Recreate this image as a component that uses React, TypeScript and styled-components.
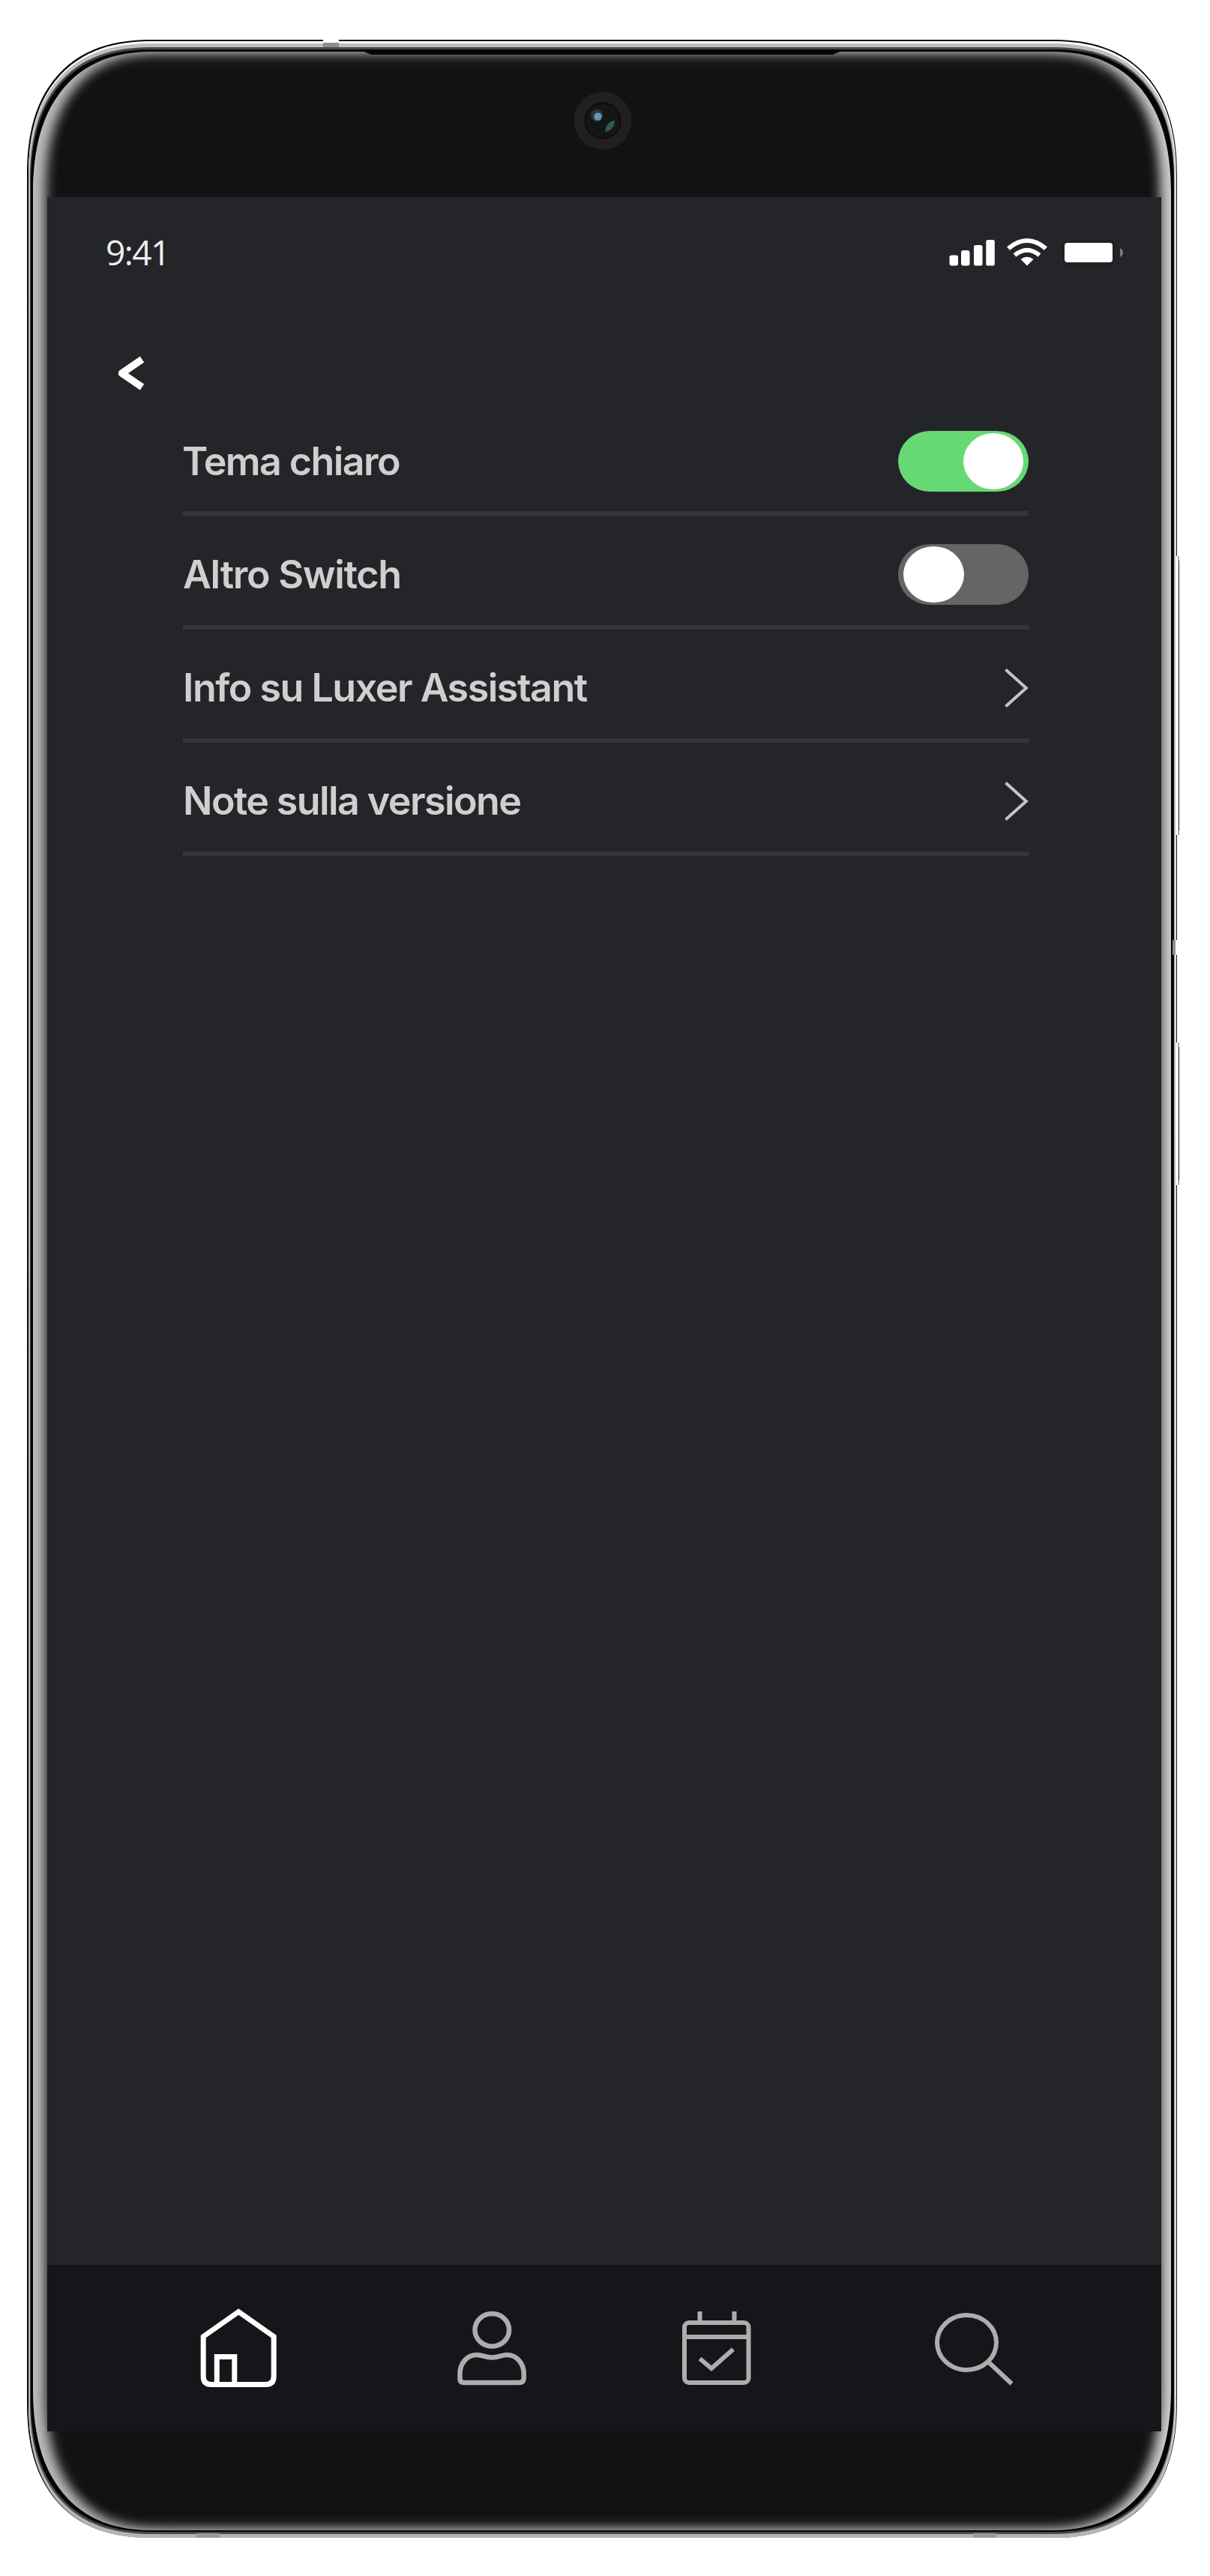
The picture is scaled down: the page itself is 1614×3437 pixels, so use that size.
import React, { useState } from "react";
import styled, { createGlobalStyle, css } from "styled-components";

const GlobalStyle = createGlobalStyle`
  *, *::before, *::after { box-sizing: border-box; }
  body { margin: 0; background: #fff; }
  button { border: 0; padding: 0; background: none; font: inherit; }
  svg { display: block; }
`;

const rounded = (rx: number, ry: number) => css`
  border-radius: ${rx * 0.88}px / ${ry * 0.86}px;
  @supports (corner-shape: superellipse(1.25)) {
    border-radius: ${rx}px / ${ry}px;
    corner-shape: superellipse(1.25);
  }
`;

const Stage = styled.main`
  width: 1614px;
  height: 3437px;
  padding: 53px 0 0 36px;
  background: #fff;
`;

const Outline = styled.div`
  position: relative;
  width: 1534px;
  height: 3333px;
  padding: 2px 1px 0 2px;
  background: #0c0c0c;
  ${rounded(167, 182)}
`;

const Shine = styled.div`
  height: 100%;
  padding: 3px 1px 0 0;
  background: #fff;
  ${rounded(166, 181)}
`;

const Metal = styled.div`
  height: 100%;
  padding: 5px 2px 5px 2px;
  background: linear-gradient(#bdbdbd, #b4b4b4);
  ${rounded(165, 180)}
`;

const Rim = styled.div`
  height: 100%;
  padding: 3px 0 3px 1px;
  background: #484848;
  ${rounded(163, 178)}
`;

const Gap = styled.div`
  height: 100%;
  padding: 3px 4px 2px 3px;
  background: #040404;
  ${rounded(162, 180)}
`;

const Glass = styled.div`
  display: flex;
  flex-direction: column;
  height: 100%;
  padding: 0 13px 0 19px;
  background: #121212;
  box-shadow:
    inset 21px 0 16px -4px rgba(200, 200, 200, 0.9),
    inset -18px 0 16px -4px rgba(212, 212, 212, 0.95),
    inset 0 3px 20px 3px rgba(130, 130, 130, 0.42),
    inset 0 -3px 18px 2px rgba(130, 130, 130, 0.4);
  ${rounded(162, 192)}
`;

const Forehead = styled.div`
  display: flex;
  justify-content: center;
  flex: none;
  height: 194px;
  padding: 53px 5px 0 0;
`;

const Speaker = styled.div`
  position: absolute;
  left: 442px;
  top: 13px;
  width: 650px;
  height: 7px;
  background: #050505;
  clip-path: polygon(0 0, 100% 0, 97.3% 100%, 2.7% 100%);
`;

const Band = styled.span<{ $x: number; $y: number; $w: number; $h: number; $c?: string }>`
  position: absolute;
  left: ${(p) => p.$x}px;
  top: ${(p) => p.$y}px;
  width: ${(p) => p.$w}px;
  height: ${(p) => p.$h}px;
  background: ${(p) => p.$c || "#8e8e8e"};
`;

const SideKey = styled.span<{ $y: number; $h: number }>`
  position: absolute;
  left: 1532px;
  top: ${(p) => p.$y}px;
  width: 5px;
  height: ${(p) => p.$h}px;
  background: #fff;
  border-right: 1px solid #111;
  &::before,
  &::after {
    content: "";
    position: absolute;
    left: 3px;
    width: 2px;
    height: 6px;
    background: #aaa;
  }
  &::before { top: 0; }
  &::after { bottom: 0; }
`;

const Screen = styled.section`
  display: flex;
  flex-direction: column;
  flex: none;
  height: 2981px;
  background: #242529;
`;

const StatusBar = styled.header`
  display: flex;
  align-items: center;
  justify-content: space-between;
  height: 148px;
  padding: 0 51px 0 78px;
`;

const Time = styled.time`
  padding-bottom: 3px;
  font: 500 46px/1 "Open Sans", "Noto Sans", sans-serif;
  letter-spacing: -1.6px;
  color: #f0f0f0;
`;

const TopBar = styled.div`
  display: flex;
  align-items: center;
  height: 126px;
  padding: 48px 0 0 93px;
`;

const List = styled.ul`
  flex: 1;
  margin: 0;
  padding: 0 177px 0 181px;
  list-style: none;
`;

const Row = styled.li`
  display: flex;
  align-items: center;
  justify-content: space-between;
  height: 151.25px;
  padding-top: 12px;
  border-bottom: 6px solid #353538;
`;

const Label = styled.span<{ $spacing: number; $shift?: number }>`
  margin-left: ${(p) => p.$shift || 0}px;
  font: 600 52px/60px Inter, sans-serif;
  letter-spacing: ${(p) => p.$spacing}px;
  color: #cfcfcf;
  white-space: nowrap;
`;

const Switch = styled.button<{ $on: boolean }>`
  display: flex;
  align-items: center;
  justify-content: ${(p) => (p.$on ? "flex-end" : "flex-start")};
  width: 174px;
  height: 81px;
  padding: 0 7px;
  border-radius: 43px / 41px;
  background: ${(p) => (p.$on ? "#67d974" : "#656565")};
`;

const Knob = styled.span`
  width: 80.5px;
  height: 75px;
  border-radius: 50%;
  background: #fff;
`;

const NavBar = styled.nav`
  display: flex;
  align-items: flex-start;
  flex: none;
  height: 222px;
  padding: 57px 0 0 203px;
  background: #15161a;
`;

const NavItem = styled.button<{ $before?: number; $active?: boolean }>`
  margin-left: ${(p) => p.$before || 0}px;
  color: ${(p) => (p.$active ? "#fff" : "#adadad")};
`;

const Camera = () => (
  <svg width="78" height="78" viewBox="-39 -39 78 78">
    <circle r="38.5" fill="#202020" />
    <circle r="23.5" fill="#171616" stroke="#100d0d" strokeWidth="2.5" />
    <circle r="17" fill="#141515" />
    <circle cx="-8" cy="-7" r="8" fill="#303538" />
    <circle cx="-6.500" cy="-5.500" r="5.200" fill="#6299ac" />
    <path d="M3 15C4 6 9 0 16 0C16 8 11 14 3 15Z" fill="#285c5c" />
  </svg>
);

const StatusIcons = () => (
  <svg width="233" height="40" viewBox="1265 317 233 40" fill="#fff">
    <rect x="1266.500" y="340.500" width="11.500" height="14" rx="3" />
    <rect x="1282" y="334" width="11.500" height="20.500" rx="3" />
    <rect x="1299" y="327" width="11.500" height="27.500" rx="2.500" />
    <rect x="1315.300" y="320" width="11.500" height="34.500" rx="2.500" />
    <g fill="none" stroke="#fff" strokeWidth="6">
      <path d="M1345 331.500Q1370 310.500 1395 331.500" />
      <path d="M1353.500 340.500Q1370 327 1386.500 340.500" />
    </g>
    <path d="M1361.500 346Q1370 339.500 1378.500 346L1370 354.500Z" />
    <rect x="1416" y="320" width="72" height="34.500" rx="8" fill="#202125" />
    <rect x="1420" y="324" width="64" height="26" rx="4" />
    <path d="M1494 331Q1498 333 1498 337Q1498 341 1494 343Z" fill="#77787a" />
  </svg>
);

const BackIcon = () => (
  <svg
    width="38"
    height="48"
    viewBox="0 0 38 48"
    fill="none"
    stroke="#fff"
    strokeWidth="9.500"
    strokeLinejoin="round"
  >
    <path d="M33.500 5.500L6.500 24L33.500 42.500" />
  </svg>
);

const Chevron = () => (
  <svg width="32" height="54" viewBox="0 0 32 54" fill="none" stroke="#c4c4c4" strokeWidth="4">
    <path d="M1.500 2.500L28.800 27L1.500 51.500" />
  </svg>
);

const HomeIcon = () => (
  <svg width="104" height="108" viewBox="266 3079 104 108" fill="none" stroke="currentColor" strokeWidth="7">
    <path d="M271.200 3117.500L318.200 3084.500L365.200 3117.500V3171Q365.200 3181.500 354 3181.500H282Q271.200 3181.500 271.200 3171Z" />
    <path d="M289.300 3182V3144.500H312.800V3182" />
  </svg>
);

const PersonIcon = () => (
  <svg width="94" height="108" viewBox="609 3079 94 108" fill="none" stroke="currentColor" strokeWidth="6.500">
    <ellipse cx="656.300" cy="3108.700" rx="22.800" ry="21.800" />
    <path d="M619 3179Q613.500 3179 613.500 3174V3167C613.500 3154 622 3142.500 635 3142C643 3141.500 647 3145.500 656 3145.500C665 3145.500 670 3141.500 677 3142C690 3142.500 698.700 3154 698.700 3167V3173Q698.700 3179 692 3179Z" />
  </svg>
);

const CalendarIcon = () => (
  <svg width="94" height="108" viewBox="909 3079 94 108" fill="none" stroke="currentColor" strokeWidth="6">
    <rect x="913" y="3099" width="85.500" height="80" rx="6" />
    <path d="M913 3118H998M933.500 3084V3098M979.500 3084V3098" />
    <path d="M933.500 3147L949 3160L978 3134.500" />
  </svg>
);

const SearchIcon = () => (
  <svg width="106" height="108" viewBox="1246 3079 106 108" fill="none" stroke="currentColor" strokeWidth="6">
    <ellipse cx="1289.500" cy="3125.500" rx="39.500" ry="36.500" />
    <path d="M1319 3152L1349.500 3180.500" />
  </svg>
);

export default function App() {
  const [light, setLight] = useState(true);
  const [other, setOther] = useState(false);

  return (
    <>
      <GlobalStyle />
      <Stage>
        <Outline>
          <Shine>
            <Metal>
              <Rim>
                <Gap>
                  <Glass>
                    <Forehead>
                      <Camera />
                    </Forehead>
                    <Screen>
                      <StatusBar>
                        <Time>9:41</Time>
                        <StatusIcons />
                      </StatusBar>
                      <TopBar>
                        <button aria-label="Indietro">
                          <BackIcon />
                        </button>
                      </TopBar>
                      <List>
                        <Row>
                          <Label $spacing={-1.6} $shift={-1}>Tema chiaro</Label>
                          <Switch $on={light} onClick={() => setLight(!light)} aria-label="Tema chiaro">
                            <Knob />
                          </Switch>
                        </Row>
                        <Row>
                          <Label $spacing={-1.25}>Altro Switch</Label>
                          <Switch $on={other} onClick={() => setOther(!other)} aria-label="Altro Switch">
                            <Knob />
                          </Switch>
                        </Row>
                        <Row>
                          <Label $spacing={-1.5}>Info su Luxer Assistant</Label>
                          <Chevron />
                        </Row>
                        <Row>
                          <Label $spacing={-1.6}>Note sulla versione</Label>
                          <Chevron />
                        </Row>
                      </List>
                      <NavBar>
                        <NavItem $active aria-label="Home">
                          <HomeIcon />
                        </NavItem>
                        <NavItem $before={239} aria-label="Profilo">
                          <PersonIcon />
                        </NavItem>
                        <NavItem $before={206} aria-label="Calendario">
                          <CalendarIcon />
                        </NavItem>
                        <NavItem $before={243} aria-label="Cerca">
                          <SearchIcon />
                        </NavItem>
                      </NavBar>
                    </Screen>
                  </Glass>
                </Gap>
              </Rim>
            </Metal>
          </Shine>
          <Speaker />
          <Band $x={395} $y={0} $w={21} $h={4} $c="#fff" />
          <Band $x={395} $y={4} $w={21} $h={6} />
          <Band $x={226} $y={3327} $w={31} $h={6} $c="#999" />
          <Band $x={1262} $y={3327} $w={31} $h={6} $c="#999" />
          <Band $x={1528} $y={1201} $w={4} $h={20} />
          <Band $x={1532} $y={1201} $w={3} $h={20} $c="#fff" />
          <SideKey $y={689} $h={372} />
          <SideKey $y={1338} $h={190} />
        </Outline>
      </Stage>
    </>
  );
}
